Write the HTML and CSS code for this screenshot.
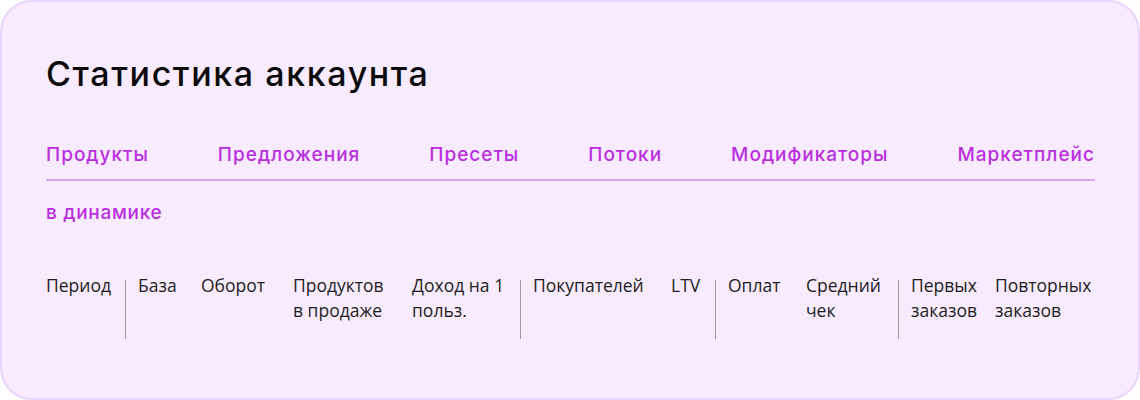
FILE: index.html
```html
<!DOCTYPE html>
<html lang="ru">
<head>
<meta charset="utf-8">
<link rel="stylesheet" href="styles.css">
</head>
<body>
<div class="card">
  <h1 class="title">Статистика аккаунта</h1>
  <nav class="tabs">
    <span class="tab">Продукты</span>
    <span class="tab">Предложения</span>
    <span class="tab">Пресеты</span>
    <span class="tab">Потоки</span>
    <span class="tab">Модификаторы</span>
    <span class="tab">Маркетплейс</span>
  </nav>
  <div class="sub">в динамике</div>
  <div class="head">
    <div class="cell c-period">Период</div>
    <div class="sep"></div>
    <div class="cell c-base">База</div>
    <div class="cell c-turn">Оборот</div>
    <div class="cell c-prod">Продуктов<br>в продаже</div>
    <div class="cell c-inc">Доход на 1<br>польз.</div>
    <div class="sep"></div>
    <div class="cell c-buy">Покупателей</div>
    <div class="cell c-ltv">LTV</div>
    <div class="sep"></div>
    <div class="cell c-pay">Оплат</div>
    <div class="cell c-avg">Средний<br>чек</div>
    <div class="sep"></div>
    <div class="cell c-first">Первых<br>заказов</div>
    <div class="cell c-rep">Повторных<br>заказов</div>
  </div>
</div>
</body>
</html>
```
FILE: styles.css
```css
html, body {
  margin: 0;
  padding: 0;
  background: #ffffff;
}
.card {
  box-sizing: border-box;
  width: 1140px;
  height: 400px;
  border: 2px solid #ead3fb;
  border-radius: 32px;
  background: #f8ebfd;
  padding: 50px 43px 0 44px;
  font-family: Inter, "Noto Sans", sans-serif;
}
.title {
  margin: 0;
  font-family: Inter, sans-serif;
  font-weight: 500;
  font-size: 34px;
  line-height: 44px;
  color: #0a0a0a;
  letter-spacing: 1.6px;
}
.tabs {
  display: flex;
  justify-content: space-between;
  margin-top: 47px;
  padding-bottom: 12px;
  border-bottom: 2px solid #d7a3f7;
}
.tab {
  font-size: 19px;
  line-height: 24px;
  font-weight: 500;
  letter-spacing: 1px;
  color: #b92fe0;
}
.sub {
  margin-top: 20px;
  font-size: 19px;
  line-height: 24px;
  font-weight: 500;
  letter-spacing: 0.7px;
  color: #b92fe0;
}
.head {
  display: flex;
  align-items: flex-start;
  margin-top: 48px;
  font-family: "Open Sans", "Noto Sans", sans-serif;
  font-size: 17.5px;
  line-height: 25px;
  color: #1e1e1e;
}
.cell {
  flex: none;
}
.sep {
  flex: none;
  width: 1px;
  height: 59px;
  margin-top: 7px;
  background: #9a9a9a;
  margin-right: 12px;
}
.c-period { width: 79px; }
.c-base { width: 63px; }
.c-turn { width: 92px; }
.c-prod { width: 119px; }
.c-inc { width: 108px; }
.c-buy { width: 138px; }
.c-ltv { width: 44px; }
.c-pay { width: 78px; }
.c-avg { width: 92px; }
.c-first { width: 84px; }
.c-rep { width: 110px; }
```
